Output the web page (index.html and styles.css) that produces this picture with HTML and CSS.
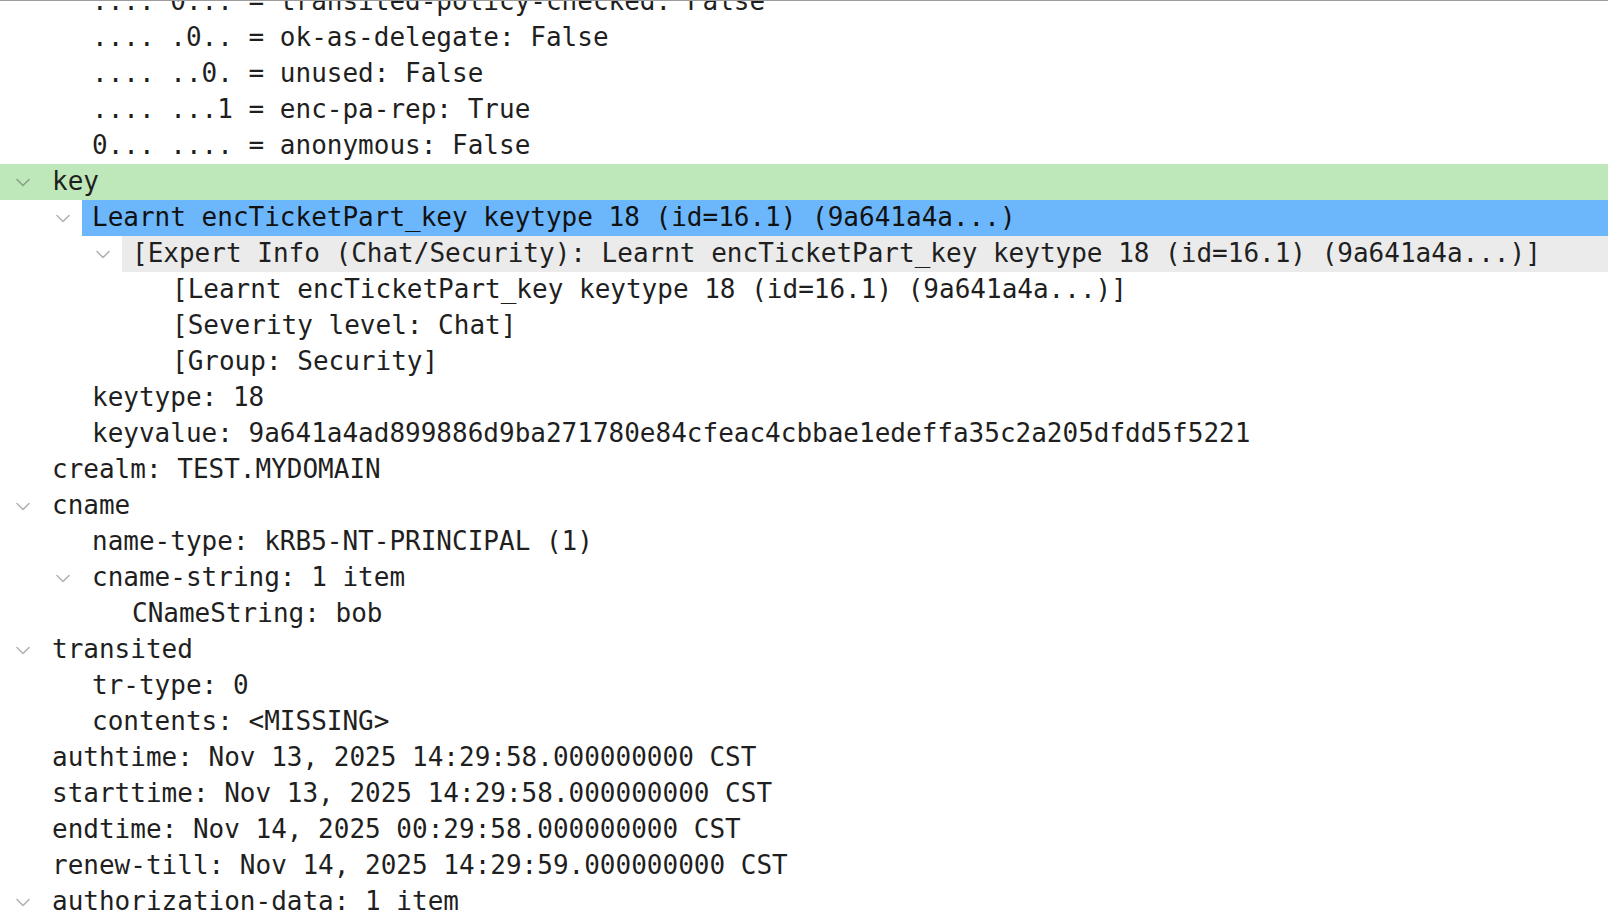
FILE: index.html
```html
<!DOCTYPE html>
<html>
<head>
<meta charset="utf-8">
<link rel="stylesheet" href="styles.css">
</head>
<body>
<div class="pane">
  <div class="tree">
    <div class="row l1"><span class="tog"></span><span class="label">.... 0... = transited-policy-checked: False</span></div>
    <div class="row l1"><span class="tog"></span><span class="label">.... .0.. = ok-as-delegate: False</span></div>
    <div class="row l1"><span class="tog"></span><span class="label">.... ..0. = unused: False</span></div>
    <div class="row l1"><span class="tog"></span><span class="label">.... ...1 = enc-pa-rep: True</span></div>
    <div class="row l1"><span class="tog"></span><span class="label">0... .... = anonymous: False</span></div>
    <div class="row l0 green"><span class="tog"><svg class="chev" viewBox="0 0 14 9" width="14" height="9"><polyline points="1,1.5 7,7.5 13,1.5"/></svg></span><span class="label">key</span></div>
    <div class="row l1"><span class="tog"><svg class="chev" viewBox="0 0 14 9" width="14" height="9"><polyline points="1,1.5 7,7.5 13,1.5"/></svg></span><span class="label sel">Learnt encTicketPart_key keytype 18 (id=16.1) (9a641a4a...)</span></div>
    <div class="row l2"><span class="tog"><svg class="chev" viewBox="0 0 14 9" width="14" height="9"><polyline points="1,1.5 7,7.5 13,1.5"/></svg></span><span class="label hl">[Expert Info (Chat/Security): Learnt encTicketPart_key keytype 18 (id=16.1) (9a641a4a...)]</span></div>
    <div class="row l3"><span class="tog"></span><span class="label">[Learnt encTicketPart_key keytype 18 (id=16.1) (9a641a4a...)]</span></div>
    <div class="row l3"><span class="tog"></span><span class="label">[Severity level: Chat]</span></div>
    <div class="row l3"><span class="tog"></span><span class="label">[Group: Security]</span></div>
    <div class="row l1"><span class="tog"></span><span class="label">keytype: 18</span></div>
    <div class="row l1"><span class="tog"></span><span class="label">keyvalue: 9a641a4ad899886d9ba271780e84cfeac4cbbae1edeffa35c2a205dfdd5f5221</span></div>
    <div class="row l0"><span class="tog"></span><span class="label">crealm: TEST.MYDOMAIN</span></div>
    <div class="row l0"><span class="tog"><svg class="chev" viewBox="0 0 14 9" width="14" height="9"><polyline points="1,1.5 7,7.5 13,1.5"/></svg></span><span class="label">cname</span></div>
    <div class="row l1"><span class="tog"></span><span class="label">name-type: kRB5-NT-PRINCIPAL (1)</span></div>
    <div class="row l1"><span class="tog"><svg class="chev" viewBox="0 0 14 9" width="14" height="9"><polyline points="1,1.5 7,7.5 13,1.5"/></svg></span><span class="label">cname-string: 1 item</span></div>
    <div class="row l2"><span class="tog"></span><span class="label">CNameString: bob</span></div>
    <div class="row l0"><span class="tog"><svg class="chev" viewBox="0 0 14 9" width="14" height="9"><polyline points="1,1.5 7,7.5 13,1.5"/></svg></span><span class="label">transited</span></div>
    <div class="row l1"><span class="tog"></span><span class="label">tr-type: 0</span></div>
    <div class="row l1"><span class="tog"></span><span class="label">contents: &lt;MISSING&gt;</span></div>
    <div class="row l0"><span class="tog"></span><span class="label">authtime: Nov 13, 2025 14:29:58.000000000 CST</span></div>
    <div class="row l0"><span class="tog"></span><span class="label">starttime: Nov 13, 2025 14:29:58.000000000 CST</span></div>
    <div class="row l0"><span class="tog"></span><span class="label">endtime: Nov 14, 2025 00:29:58.000000000 CST</span></div>
    <div class="row l0"><span class="tog"></span><span class="label">renew-till: Nov 14, 2025 14:29:59.000000000 CST</span></div>
    <div class="row l0"><span class="tog"><svg class="chev" viewBox="0 0 14 9" width="14" height="9"><polyline points="1,1.5 7,7.5 13,1.5"/></svg></span><span class="label">authorization-data: 1 item</span></div>
  </div>
</div>
</body>
</html>
```

FILE: styles.css
```css
html, body {
  margin: 0;
  padding: 0;
  background: #ffffff;
}

.pane {
  height: 924px;
  box-sizing: border-box;
  border-top: 1px solid #9c9c9c;
  overflow: hidden;
  background: #ffffff;
}

.tree {
  margin-top: -17px;
  font-family: "DejaVu Sans Mono", "Liberation Mono", monospace;
  font-size: 26px;
  color: #1f1f1f;
}

.row {
  display: flex;
  align-items: stretch;
  height: 36px;
  white-space: pre;
}

.l0 { padding-left: 0; }
.l1 { padding-left: 40px; }
.l2 { padding-left: 80px; }
.l3 { padding-left: 120px; }

.tog {
  flex: 0 0 42px;
  display: flex;
  align-items: center;
  padding-left: 16px;
  box-sizing: border-box;
}

.chev {
  display: block;
  fill: none;
  stroke: rgba(0, 0, 0, 0.3);
  stroke-width: 1.6;
  stroke-linecap: round;
  stroke-linejoin: round;
  margin-top: 1px;
}

.label {
  flex: 1 1 auto;
  padding-left: 10px;
  line-height: 34px;
}

.green {
  background: #bfe8ba;
}

.sel {
  background: #6cb7fc;
  color: #111111;
}

.hl {
  background: #ebebeb;
}
```
